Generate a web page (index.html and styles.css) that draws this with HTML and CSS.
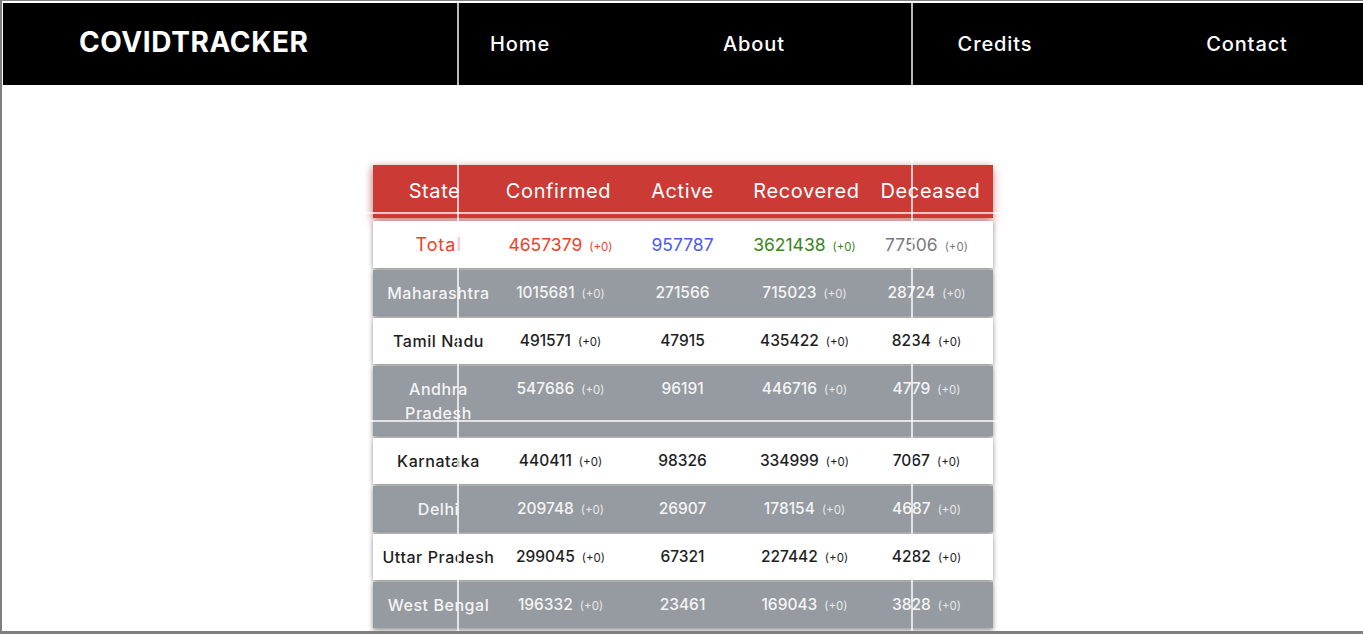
FILE: index.html
```html
<!DOCTYPE html>
<html lang="en">
<head>
<meta charset="utf-8">
<title>CovidTracker</title>
<link rel="stylesheet" href="styles.css">
</head>
<body>
<div class="frame">
  <header class="topbar">
    <div class="brand">COVIDTRACKER</div>
    <nav class="nav nav-mid">
      <a class="nav-link" href="#">Home</a>
      <a class="nav-link" href="#">About</a>
    </nav>
    <nav class="nav nav-right">
      <a class="nav-link" href="#">Credits</a>
      <a class="nav-link" href="#">Contact</a>
    </nav>
  </header>

  <main class="content">
    <div class="table">
      <div class="row row-head">
        <div class="cell">State</div>
        <div class="cell">Confirmed</div>
        <div class="cell">Active</div>
        <div class="cell">Recovered</div>
        <div class="cell">Deceased</div>
      </div>
      <div class="row row-total">
        <div class="cell state c-red">Total</div>
        <div class="cell c-red">4657379<span class="delta">(+0)</span></div>
        <div class="cell c-blue">957787</div>
        <div class="cell c-green">3621438<span class="delta">(+0)</span></div>
        <div class="cell c-gray">77506<span class="delta">(+0)</span></div>
      </div>
      <div class="row row-dark">
        <div class="cell state">Maharashtra</div>
        <div class="cell">1015681<span class="delta">(+0)</span></div>
        <div class="cell">271566</div>
        <div class="cell">715023<span class="delta">(+0)</span></div>
        <div class="cell">28724<span class="delta">(+0)</span></div>
      </div>
      <div class="row row-light">
        <div class="cell state">Tamil Nadu</div>
        <div class="cell">491571<span class="delta">(+0)</span></div>
        <div class="cell">47915</div>
        <div class="cell">435422<span class="delta">(+0)</span></div>
        <div class="cell">8234<span class="delta">(+0)</span></div>
      </div>
      <div class="row row-dark">
        <div class="cell state state-narrow">Andhra Pradesh</div>
        <div class="cell">547686<span class="delta">(+0)</span></div>
        <div class="cell">96191</div>
        <div class="cell">446716<span class="delta">(+0)</span></div>
        <div class="cell">4779<span class="delta">(+0)</span></div>
      </div>
      <div class="row row-light">
        <div class="cell state">Karnataka</div>
        <div class="cell">440411<span class="delta">(+0)</span></div>
        <div class="cell">98326</div>
        <div class="cell">334999<span class="delta">(+0)</span></div>
        <div class="cell">7067<span class="delta">(+0)</span></div>
      </div>
      <div class="row row-dark">
        <div class="cell state">Delhi</div>
        <div class="cell">209748<span class="delta">(+0)</span></div>
        <div class="cell">26907</div>
        <div class="cell">178154<span class="delta">(+0)</span></div>
        <div class="cell">4687<span class="delta">(+0)</span></div>
      </div>
      <div class="row row-light">
        <div class="cell state">Uttar Pradesh</div>
        <div class="cell">299045<span class="delta">(+0)</span></div>
        <div class="cell">67321</div>
        <div class="cell">227442<span class="delta">(+0)</span></div>
        <div class="cell">4282<span class="delta">(+0)</span></div>
      </div>
      <div class="row row-dark">
        <div class="cell state">West Bengal</div>
        <div class="cell">196332<span class="delta">(+0)</span></div>
        <div class="cell">23461</div>
        <div class="cell">169043<span class="delta">(+0)</span></div>
        <div class="cell">3828<span class="delta">(+0)</span></div>
      </div>
    </div>
  </main>

  <div class="guide guide-v guide-v1"></div>
  <div class="guide guide-v guide-v2"></div>
  <div class="guide guide-h guide-h1"></div>
  <div class="guide guide-h guide-h2"></div>
</div>
</body>
</html>
```

FILE: styles.css
```css
* { box-sizing: border-box; }

html, body {
  margin: 0;
  padding: 0;
  background: #ffffff;
  overflow: hidden;
}

body {
  font-family: "Inter", "Open Sans", "DejaVu Sans", sans-serif;
  color: #222222;
}

.frame {
  position: relative;
  height: 634px;
  overflow: hidden;
  border-left: 2px solid #7f7f7f;
  border-top: 1px solid #7f7f7f;
  border-bottom: 3px solid #7f7f7f;
  background: #ffffff;
}

/* ---------- top bar ---------- */
.topbar {
  display: flex;
  height: 82px;
  margin: 2px 0 0 1px;
  background: #000000;
  color: #ffffff;
}

.brand {
  width: 454px;
  padding-left: 76px;
  font-size: 28px;
  font-weight: 700;
  line-height: 78px;
  letter-spacing: 0.6px;
}

.nav {
  display: flex;
  align-items: center;
}

.nav-mid {
  width: 454px;
  gap: 108px;
}

.nav-right {
  flex: 1;
  padding-left: 21px;
  gap: 126px;
}

.nav-link {
  width: 126px;
  text-align: center;
  color: #ffffff;
  text-decoration: none;
  font-size: 20px;
  font-weight: 500;
  line-height: 78px;
  letter-spacing: 0.9px;
}

/* ---------- table ---------- */
.content {
  padding-top: 80px;
}

.table {
  width: 620px;
  margin: 0 auto;
}

.row {
  display: grid;
  grid-template-columns: repeat(5, 1fr);
  padding: 0 5px;
  margin-bottom: 2px;
  box-shadow: 0 2px 5px rgba(0, 0, 0, 0.45);
}

.cell {
  padding: 11px 2px;
  text-align: center;
  font-size: 15.5px;
  font-weight: 500;
  line-height: 24px;
  white-space: nowrap;
}

.state {
  white-space: normal;
  font-size: 16px;
  letter-spacing: 0.55px;
}

.state-narrow { padding: 11px 6px; }

.delta {
  margin-left: 7px;
  font-size: 11.5px;
  font-weight: 400;
  line-height: 1;
  letter-spacing: 0;
}

.row-head {
  padding: 0;
  background: #cc3a36;
  color: #ffffff;
  margin-bottom: 3px;
  box-shadow: 0 4px 9px rgba(204, 58, 54, 0.6), -2px 0 6px rgba(0, 0, 0, 0.15);
}

.row-head .cell {
  padding: 13px 0;
  font-size: 20px;
  font-weight: 400;
  line-height: 27px;
  letter-spacing: 0.6px;
}

.row-total {
  background: #ffffff;
}

.row-total .cell {
  padding: 12px 0 11px;
  font-size: 17.5px;
  font-weight: 400;
}

.row-total .state {
  font-size: 18px;
  letter-spacing: 0.9px;
}

.row-light {
  background: #ffffff;
  color: #1e1e1e;
}

.row-dark {
  background: #959ba1;
  color: #f4f4f4;
}

.row-dark .delta { color: #e8e8e8; }

.c-red { color: #ef4129; }
.c-blue { color: #4a5bf0; }
.c-green { color: #3a861c; }
.c-gray { color: #7a7a7a; }

/* ---------- overlay guide lines ---------- */
.guide {
  position: absolute;
  background: rgba(255, 255, 255, 0.72);
  pointer-events: none;
}

.guide-v {
  top: 0;
  bottom: 0;
  width: 2px;
}

.guide-v1 { left: 455px; }
.guide-v2 { left: 909px; }

.guide-h {
  left: 0;
  right: 0;
  height: 2px;
}

.guide-h1 { top: 211px; }
.guide-h2 { top: 419px; }
```
